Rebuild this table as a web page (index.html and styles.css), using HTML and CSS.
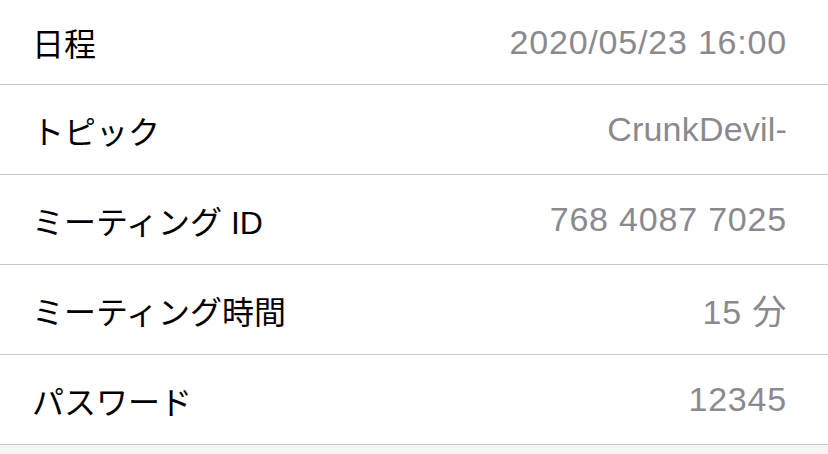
FILE: index.html
```html
<!DOCTYPE html>
<html lang="ja">
<head>
<meta charset="utf-8">
<link rel="stylesheet" href="styles.css">
</head>
<body>
<div class="list">
  <div class="row first"><span class="label">日程</span><span class="value num">2020/05/23 16:00</span></div>
  <div class="row"><span class="label">トピック</span><span class="value">CrunkDevil-</span></div>
  <div class="row"><span class="label">ミーティング ID</span><span class="value num">768 4087 7025</span></div>
  <div class="row"><span class="label">ミーティング時間</span><span class="value num">15 分</span></div>
  <div class="row"><span class="label">パスワード</span><span class="value num">12345</span></div>
</div>
</body>
</html>
```
FILE: styles.css
```css
html, body {
  margin: 0;
  padding: 0;
  background: #f6f6f6;
}
body {
  font-family: "Liberation Sans", "Noto Sans CJK JP", sans-serif;
}
.list {
  background: #ffffff;
}
.row {
  display: flex;
  justify-content: space-between;
  align-items: center;
  height: 89px;
  padding: 0 41px 0 32px;
  border-bottom: 1px solid #c8c7cc;
  font-size: 32px;
}
.row.first {
  height: 84px;
}
.label {
  color: #000000;
}
.value {
  color: #8a8a8e;
  font-size: 34px;
  letter-spacing: 0.2px;
}
.value.num {
  letter-spacing: 0.8px;
}
```
